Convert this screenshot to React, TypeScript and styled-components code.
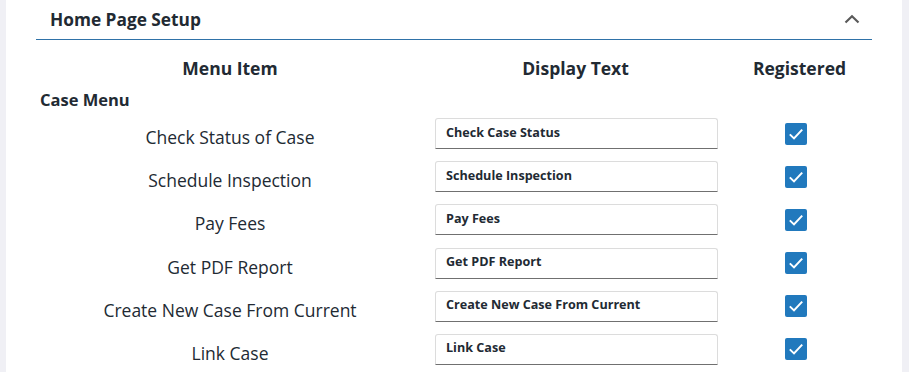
import React from "react";
import styled, { createGlobalStyle } from "styled-components";

const GlobalStyle = createGlobalStyle`
  html, body {
    margin: 0;
    padding: 0;
    background: #ffffff;
    font-family: "Open Sans", "Liberation Sans", sans-serif;
    color: #222a33;
  }
`;

const Page = styled.div`
  display: flex;
  width: 909px;
  height: 372px;
  overflow: hidden;
`;

const SideStrip = styled.div<{ $width: number }>`
  flex: 0 0 ${(p) => p.$width}px;
  background: #f0f0f5;
`;

const Main = styled.div`
  flex: 1;
  padding: 0 30px;
  background: #ffffff;
`;

const PanelHeader = styled.div`
  display: flex;
  align-items: center;
  justify-content: space-between;
  height: 39px;
  padding: 0 12px 0 14px;
  border-bottom: 1px solid #2f72a8;
`;

const PanelTitle = styled.h2`
  margin: 0;
  font-size: 17.3px;
  font-weight: 700;
  color: #222a33;
`;

const ToggleButton = styled.button`
  display: flex;
  align-items: center;
  background: none;
  border: none;
  padding: 0;
  margin-top: -2px;
  cursor: pointer;
`;

const Grid = styled.div`
  display: grid;
  grid-template-columns: 388px 303px 1fr;
  align-items: center;
  row-gap: 12.2px;
`;

const HeadRow = styled(Grid)`
  margin-top: 16px;
`;

const HeadCell = styled.div`
  text-align: center;
  font-size: 17.5px;
  font-weight: 700;
  line-height: 24px;
`;

const GroupTitle = styled.div`
  margin: 9px 0 7px 4px;
  font-size: 16.5px;
  font-weight: 700;
  line-height: 22px;
`;

const ItemLabel = styled.div`
  text-align: center;
  font-size: 17.5px;
  line-height: 24px;
  padding-top: 7px;
`;

const InputCell = styled.div`
  display: flex;
  justify-content: center;
  padding-left: 2px;
`;

const TextInput = styled.input`
  box-sizing: border-box;
  width: 283px;
  height: 31px;
  padding: 0 10px 3px;
  border: 1px solid #dcdcdc;
  border-bottom: 1px solid #707070;
  border-radius: 3px 3px 0 0;
  font-family: "Open Sans", "Liberation Sans", sans-serif;
  font-size: 12.6px;
  font-weight: 700;
  color: #222a33;
  background: #ffffff;
  outline: none;
`;

const CheckCell = styled.div`
  display: flex;
  justify-content: center;
  padding-right: 7px;
`;

const CheckBox = styled.span`
  display: flex;
  align-items: center;
  justify-content: center;
  width: 22px;
  height: 22px;
  border-radius: 2px;
  background: #2179bd;
`;

const items = [
  { label: "Check Status of Case", text: "Check Case Status" },
  { label: "Schedule Inspection", text: "Schedule Inspection" },
  { label: "Pay Fees", text: "Pay Fees" },
  { label: "Get PDF Report", text: "Get PDF Report" },
  { label: "Create New Case From Current", text: "Create New Case From Current" },
  { label: "Link Case", text: "Link Case" },
];

function Chevron() {
  return (
    <svg width="16" height="10" viewBox="0 0 16 10">
      <path d="M1.5 8.5 L8 2.2 L14.5 8.5" fill="none" stroke="#5a5a5a" strokeWidth="2.2" />
    </svg>
  );
}

function Check() {
  return (
    <svg width="16" height="14" viewBox="0 0 16 14">
      <path d="M1.8 7.4 L6 11.4 L14.2 2.6" fill="none" stroke="#ffffff" strokeWidth="2" />
    </svg>
  );
}

export default function App() {
  return (
    <>
      <GlobalStyle />
      <Page>
        <SideStrip $width={6} />
        <Main>
          <PanelHeader>
            <PanelTitle>Home Page Setup</PanelTitle>
            <ToggleButton aria-label="Collapse">
              <Chevron />
            </ToggleButton>
          </PanelHeader>
          <HeadRow>
            <HeadCell>Menu Item</HeadCell>
            <HeadCell>Display Text</HeadCell>
            <HeadCell>Registered</HeadCell>
          </HeadRow>
          <GroupTitle>Case Menu</GroupTitle>
          <Grid>
            {items.map((item) => (
              <React.Fragment key={item.label}>
                <ItemLabel>{item.label}</ItemLabel>
                <InputCell>
                  <TextInput defaultValue={item.text} />
                </InputCell>
                <CheckCell>
                  <CheckBox>
                    <Check />
                  </CheckBox>
                </CheckCell>
              </React.Fragment>
            ))}
          </Grid>
        </Main>
        <SideStrip $width={7} />
      </Page>
    </>
  );
}
